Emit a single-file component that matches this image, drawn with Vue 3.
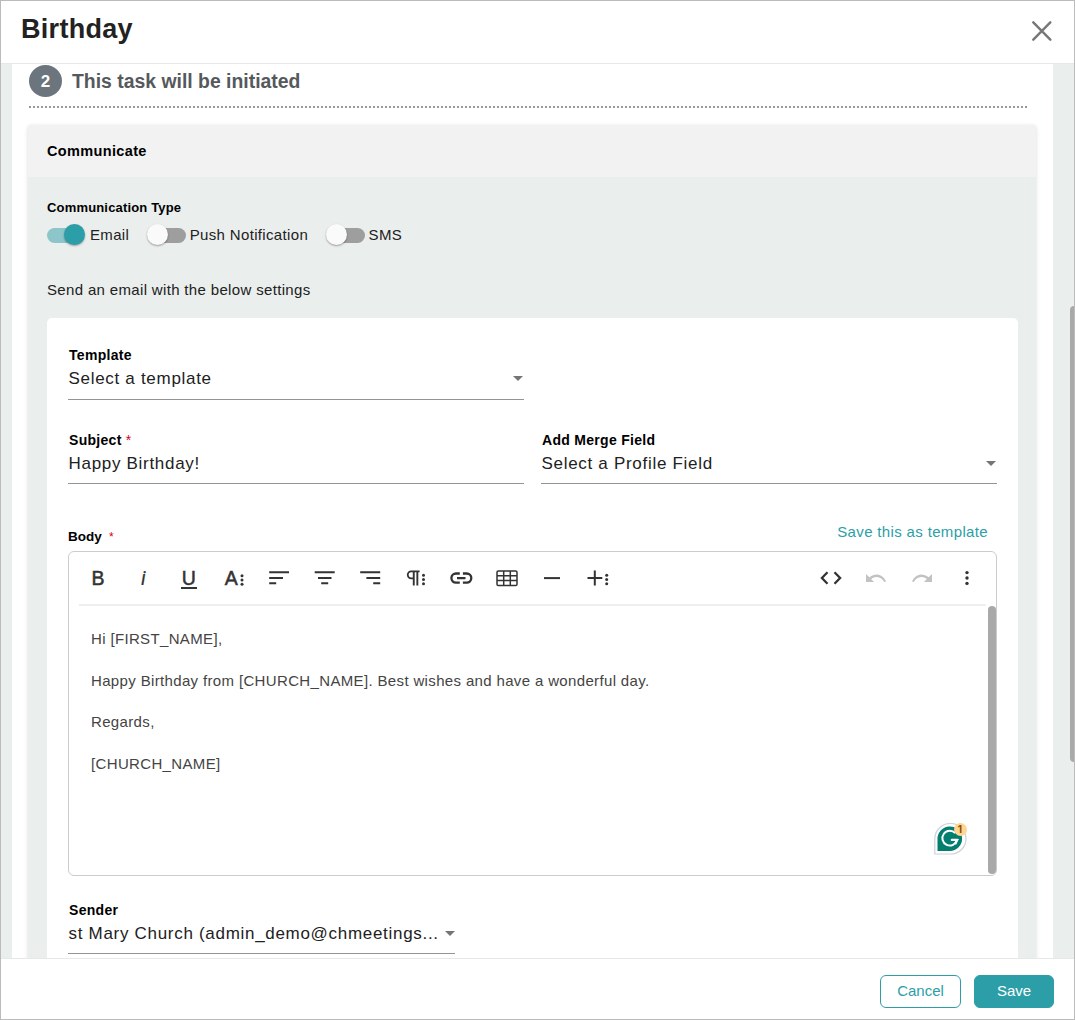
<script setup>
const channels = [
  { label: 'Email', on: true },
  { label: 'Push Notification', on: false },
  { label: 'SMS', on: false },
]
const message = [
  'Hi [FIRST_NAME],',
  'Happy Birthday from [CHURCH_NAME]. Best wishes and have a wonderful day.',
  'Regards,',
  '[CHURCH_NAME]',
]
</script>

<template>
  <div class="dialog">
    <header class="head">
      <h1>Birthday</h1>
      <svg class="close" width="20" height="20" viewBox="0 0 20 20"><path d="M1.300 1.300 18.300 18.700M18.300 1.300 1.300 18.700" /></svg>
    </header>

    <main class="scroll">
      <section class="sheet">
        <div class="step">
          <span class="num">2</span>
          <h2>This task will be initiated</h2>
        </div>
        <div class="card">
          <div class="card-head">Communicate</div>
          <div class="card-body">
            <div class="type-label">Communication Type</div>
            <div class="toggles">
              <label v-for="c in channels" :key="c.label" class="channel">
                <span class="switch" :class="{ on: c.on }"><span class="knob"></span></span>
                <span>{{ c.label }}</span>
              </label>
            </div>
            <p class="hint">Send an email with the below settings</p>

            <div class="panel">
              <div class="row">
                <div class="field">
                  <div class="label">Template</div>
                  <div class="value tall"><span>Select a template</span><i class="caret"></i></div>
                </div>
                <div class="field blank"></div>
              </div>
              <div class="row second">
                <div class="field">
                  <div class="label">Subject <span class="req">*</span></div>
                  <div class="value"><span>Happy Birthday!</span></div>
                </div>
                <div class="field">
                  <div class="label">Add Merge Field</div>
                  <div class="value"><span>Select a Profile Field</span><i class="caret"></i></div>
                </div>
              </div>

              <div class="body-row">
                <div class="body-label">Body <span class="req">*</span></div>
                <a class="link">Save this as template</a>
              </div>

              <div class="editor">
                <div class="toolbar">
                  <div class="group">
                    <button class="glyph">B</button>
                    <button class="glyph ital">i</button>
                    <button class="glyph under">U</button>
                    <button class="glyph more">A<svg width="4" height="14" viewBox="0 0 4 14"><circle cx="2" cy="2.700" r="1.500" /><circle cx="2" cy="7" r="1.500" /><circle cx="2" cy="11.300" r="1.500" /></svg></button>
                    <button><svg width="24" height="24" viewBox="0 0 24 24"><path d="M1.200 5.300H21v2H1.200zM1.200 11H15v2H1.200zM1.200 16.300h7v2h-7z" /></svg></button>
                    <button><svg width="24" height="24" viewBox="0 0 24 24"><path d="M1.700 5.300h20v2h-20zM5 11h13.500v2H5zM8.200 16.300h7v2h-7z" /></svg></button>
                    <button><svg width="24" height="24" viewBox="0 0 24 24"><path d="M1.200 5.300h20v2h-20zM7.400 11h13.800v2H7.400zM14.200 16.300h7v2h-7z" /></svg></button>
                    <button><svg width="24" height="24" viewBox="0 0 24 24"><path d="M7.200 4.500h8.400v1.800h-1.300v13.200h-1.900V6.300h-1.700v13.200H8.800V13.200H7.200a4.350 4.350 0 0 1 0-8.700zM8.800 6.300H7.200a2.500 2.500 0 0 0 0 5.100h1.600z" fill-rule="evenodd" /><circle cx="19.500" cy="9.300" r="1.500" /><circle cx="19.500" cy="13.500" r="1.500" /><circle cx="19.500" cy="17.700" r="1.500" /></svg></button>
                    <button><svg width="24" height="24" viewBox="0 0 24 24"><path class="line heavy" d="M9.800 7.500H6a4.500 4.500 0 0 0 0 9.200h3.800M12.900 7.500h3.800a4.500 4.500 0 0 1 0 9.200h-3.800M7 12.100h8.500" /></svg></button>
                    <button><svg width="24" height="24" viewBox="0 0 24 24"><path class="thin" d="M3.300 4.900h17.400q1.300 0 1.300 1.300v12q0 1.300-1.300 1.300H3.300Q2 19.500 2 18.200V6.200q0-1.300 1.300-1.300zM2 9.700h20M2 14.600h20M8.700 4.900v14.600M15.300 4.900v14.600" /></svg></button>
                    <button><svg width="24" height="24" viewBox="0 0 24 24"><path d="M4 11.100h16v2H4z" /></svg></button>
                    <button><svg width="24" height="24" viewBox="0 0 24 24"><path d="M1.500 11.100h6.300V4.600h2v6.500h6.500v2H9.800v6.500h-2v-6.500H1.500z" /><circle cx="20.700" cy="9.300" r="1.500" /><circle cx="20.700" cy="13.500" r="1.500" /><circle cx="20.700" cy="17.700" r="1.500" /></svg></button>
                  </div>
                  <div class="group">
                    <button><svg width="24" height="24" viewBox="0 0 24 24"><path class="line heavy" d="M8.500 6.300 2.900 12l5.600 5.700M15.500 6.300l5.600 5.700-5.600 5.700" /></svg></button>
                    <button class="off"><svg width="24" height="24" viewBox="0 0 24 24"><path d="M2 8v8h8l-2.900-2.900A8.400 8.400 0 0 1 20.200 16l1.800-.6A10.300 10.300 0 0 0 5.300 11.300z" /></svg></button>
                    <button class="off"><svg width="24" height="24" viewBox="0 0 24 24"><path d="M22 8v8h-8l2.900-2.900A8.400 8.400 0 0 0 3.800 16L2 15.400A10.300 10.300 0 0 1 18.700 11.300z" /></svg></button>
                    <button><svg width="24" height="24" viewBox="0 0 24 24"><circle cx="12" cy="6.600" r="1.700" /><circle cx="12" cy="12" r="1.700" /><circle cx="12" cy="17.400" r="1.700" /></svg></button>
                  </div>
                </div>
                <div class="content">
                  <p v-for="line in message" :key="line">{{ line }}</p>
                </div>
                <div class="thumb"></div>
                <div class="assist">
                  <svg width="34" height="33" viewBox="0 0 34 33">
                    <path d="M.8 31V16A15.600 15.600 0 0 1 16.400.5 15.500 15.500 0 0 1 32 16 15.300 15.300 0 0 1 16.500 31z" fill="#fff" stroke="#cfd1dc" stroke-width="1.200" />
                    <path d="M3.500 28V16a12.300 12.300 0 1 1 12.400 12z" fill="#027e6f" />
                    <path d="M21.300 10.200A7.400 7.400 0 1 0 23 16.800h-5.600" fill="none" stroke="#fff" stroke-width="2" />
                    <path d="M16.800 16.800h6.700l-2.200 4.600" fill="none" stroke="#fff" stroke-width="1.800" />
                  </svg>
                  <span class="badge">1</span>
                </div>
              </div>

              <div class="sender">
                <div class="label">Sender</div>
                <div class="value"><span>st Mary Church (admin_demo@chmeetings...</span><i class="caret"></i></div>
              </div>
            </div>
          </div>
        </div>
      </section>
      <div class="page-thumb"></div>
    </main>

    <footer class="foot">
      <button class="btn">Cancel</button>
      <button class="btn primary">Save</button>
    </footer>
  </div>
</template>

<style>
body { background: #fff; }
</style>

<style scoped>
* { box-sizing: border-box; margin: 0; }
.dialog {
  width: 1075px; height: 1020px; border: 1px solid #bbb; background: #fff;
  display: flex; flex-direction: column; overflow: hidden;
  font: 15px/20px "Liberation Sans", Arial, sans-serif; color: #212121;
}
button { font: inherit; border: 0; background: none; padding: 0; }
.head {
  flex: none; height: 63px; border-bottom: 1px solid #e6e8e8;
  display: flex; justify-content: space-between; padding: 0 22px 0 20px;
}
h1 { font-size: 27px; line-height: 32px; margin-top: 12px; letter-spacing: .3px; color: #222; }
.close { margin-top: 20px; stroke: #777; stroke-width: 2.4; stroke-linecap: round; }
.scroll { flex: 1; min-height: 0; background: #eaeeed; position: relative; overflow: hidden; padding: 0 21px 0 11px; }
.sheet { background: #fff; height: 1000px; padding: 0 17px 0 16px; }
.step {
  height: 44px; margin: 0 9px 0 1px; padding-top: 1px; display: flex; gap: 10px;
  border-bottom: 2px dotted #999;
}
.num {
  width: 33px; height: 32px; border-radius: 50%; background: #6c757d; color: #fff;
  font-weight: 700; font-size: 17px; line-height: 33px; text-align: center;
}
h2 { font-size: 19.4px; line-height: 32px; color: #55595c; }
.card { margin-top: 17px; height: 900px; background: #eaeeed; border-radius: 4px 4px 0 0; box-shadow: 0 1px 4px rgba(0, 0, 0, .15); }
.card-head {
  height: 52px; line-height: 52px; padding-left: 19px; background: #f2f2f2; color: #000;
  border-radius: 4px 4px 0 0; font-weight: 700; font-size: 14.5px; letter-spacing: .35px;
}
.card-body { padding: 21px 18px 0 19px; }
.type-label { font-weight: 700; font-size: 13px; line-height: 20px; letter-spacing: .17px; color: #000; }
.toggles { display: flex; gap: 17.5px; height: 34px; align-items: center; letter-spacing: .34px; }
.channel { display: flex; align-items: center; gap: 4px; }
.switch { width: 39px; height: 22px; display: flex; align-items: center; position: relative; }
.switch::before { content: ""; width: 37px; height: 15px; border-radius: 8px; background: #9e9e9e; margin-left: 2px; }
.switch.on::before { background: #8cc6ca; margin-left: 0; }
.knob {
  position: absolute; left: 0; top: 0; width: 21px; height: 21px; border-radius: 50%; background: #fafafa;
  box-shadow: 0 1px 2px rgba(0, 0, 0, .35);
}
.switch.on .knob { left: 17.4px; background: #2c9ea8; }
.hint { margin-top: 28px; line-height: 20px; letter-spacing: .34px; }
.panel { margin-top: 18px; height: 760px; background: #fff; border-radius: 5px 5px 0 0; padding: 27px 21px 0; }
.row { display: flex; gap: 17px; }
.second { margin-top: 30px; }
.field { flex: 1; }
.label { font-size: 14px; font-weight: 700; line-height: 20px; letter-spacing: .3px; color: #000; padding-left: 1px; }
.req { color: #d0021b; font-weight: 400; }
.value {
  height: 34px; border-bottom: 1px solid #949494; display: flex; justify-content: space-between;
  font-size: 17px; line-height: 28px; letter-spacing: .7px; white-space: nowrap;
}
.value span { padding-left: .5px; }
.value.tall { height: 35px; }
.caret { border: 5.5px solid transparent; border-top-color: #757575; border-bottom: 0; height: 5px; margin-top: 11px; }
.row .caret { margin-right: 1px; }
.body-row { margin-top: 38px; height: 29px; display: flex; justify-content: space-between; padding-right: 9px; }
.body-label { font-size: 13.5px; font-weight: 700; color: #000; margin-top: 4.5px; }
.body-label .req { margin-left: 3.5px; font-size: 12px; }
.link { color: #2c9ea8; letter-spacing: .35px; }
.editor { height: 325px; border: 1px solid #ccc; border-radius: 6px; position: relative; }
.toolbar { height: 54px; margin: 0 10px; border-bottom: 2px solid #efefef; display: flex; justify-content: space-between; }
.group { display: flex; gap: 7.45px; height: 52px; align-items: center; }
.group button { width: 38px; height: 24px; display: flex; align-items: center; justify-content: center; color: #333; }
.group svg { fill: #333; flex: none; }
.group .off svg { fill: #c2c2c2; }
.group .line { fill: none; stroke: #333; stroke-width: 2; }
.group .heavy { stroke-width: 2.3; }
.group .thin { fill: none; stroke: #333; stroke-width: 1.5; }
.group .glyph { font: 400 19.5px/24px "Liberation Sans", Arial, sans-serif; position: relative; -webkit-text-stroke: .5px #333; }
.group .ital { font: italic 400 20px/24px Roboto, sans-serif; -webkit-text-stroke: .2px #333; }
.group .under { line-height: 22px; padding-bottom: 1px; }
.under::after { content: ""; position: absolute; left: 11px; bottom: 1px; width: 16px; height: 2px; background: #333; }
.more svg { margin: 3px 0 0 2px; }
.content { padding: 23px 22px 0; color: #444; letter-spacing: .35px; }
.content p { line-height: 20px; margin-bottom: 21.7px; }
.thumb { position: absolute; right: 0; top: 54px; width: 8px; height: 268px; border-radius: 4px; background: #a9a9a9; }
.assist { position: absolute; left: 865px; top: 271px; width: 34px; height: 33px; }
.badge {
  position: absolute; left: 19.5px; top: 0; width: 13px; height: 13px; border-radius: 50%; background: #ffd591;
  color: #8a4b00; font: 700 10px/13px Inter, sans-serif; text-align: center;
}
.sender { width: 387px; margin-top: 24px; }
.page-thumb { position: absolute; right: 0; top: 242px; width: 4px; height: 456px; background: #a9a9a9; border-radius: 4px 0 0 4px; }
.foot {
  flex: none; height: 61px; border-top: 1px solid #e6e8e8; display: flex; justify-content: flex-end;
  gap: 13px; padding: 16px 20px 0 0;
}
.btn {
  width: 81px; height: 33px; border: 1px solid #2c9ea8; border-radius: 6px; color: #2c9ea8;
  font-size: 15px; line-height: 29px; padding-bottom: 2px;
}
.btn.primary { width: 80px; background: #2c9ea8; color: #fff; }
</style>
